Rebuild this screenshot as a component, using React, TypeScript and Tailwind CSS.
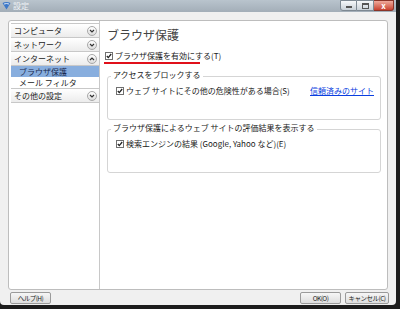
import React from 'react';

const font = { fontFamily: '"Noto Sans CJK JP", "Liberation Sans", sans-serif' };

const Chevron: React.FC<{ up?: boolean }> = ({ up }) => (
  <span className="flex h-[10px] w-[10px] items-center justify-center rounded-full border border-[#a8a8a8] bg-gradient-to-b from-white to-[#dcdcdc]">
    <svg width="6" height="4" viewBox="0 0 6 4">
      <path d={up ? 'M1 3 L3 1 L5 3' : 'M1 1 L3 3 L5 1'} stroke="#333" strokeWidth="1.2" fill="none" />
    </svg>
  </span>
);

const Check: React.FC = () => (
  <span className="flex h-[8px] w-[8px] shrink-0 items-center justify-center border border-[#707070] bg-white">
    <svg width="6" height="6" viewBox="0 0 6 6">
      <path d="M0.8 3 L2.3 4.6 L5.2 1" stroke="#222" strokeWidth="1.3" fill="none" />
    </svg>
  </span>
);

const SideHeader: React.FC<{ label: string; up?: boolean }> = ({ label, up }) => (
  <div className="flex h-[14px] items-center justify-between border-b border-[#c8c8c8] bg-gradient-to-b from-white to-[#ececec] pl-[3px] pr-[2px]">
    <span className="text-[8px] leading-none text-[#222]">{label}</span>
    <Chevron up={up} />
  </div>
);

const GroupBox: React.FC<{ legend: string; children: React.ReactNode }> = ({ legend, children }) => (
  <div className="relative ml-[7px] mr-[6px] h-[44px] rounded-[3px] border border-[#d5d5d5]">
    <span className="absolute left-[3px] top-[-6px] bg-white px-[2px] text-[8px] leading-none text-[#222]">{legend}</span>
    <div className="flex items-center pl-[8px] pr-[6px] pt-[10px]">{children}</div>
  </div>
);

const Button: React.FC<{ label: string; className?: string }> = ({ label, className = '' }) => (
  <button
    className={`flex h-[12px] items-center justify-center whitespace-nowrap rounded-[2px] border border-[#9a9a9a] bg-gradient-to-b from-[#f6f6f6] to-[#dedede] p-0 text-[6.5px] leading-none tracking-[-0.5px] text-[#222] ${className}`}
  >
    {label}
  </button>
);

export default function App() {
  return (
    <div className="h-[309px] w-[400px] overflow-hidden bg-[#1c1c1c]" style={font}>
      <div className="flex h-[305px] w-[396px] flex-col rounded-b-[4px] bg-[#f0f0f0]">
        {/* title bar */}
        <div className="flex h-[12px] items-center justify-between bg-gradient-to-b from-[#b9c4cd] to-[#a3aeb8] pr-[2px]">
          <div className="flex items-center pl-[2px]">
            <svg width="9" height="8" viewBox="0 0 9 8">
              <path d="M0.5 1 Q4.5 -1 8.5 1 L4.5 7.5 Z" fill="#3c78c8" />
              <path d="M2 2 Q4.5 1 7 2" stroke="#fff" strokeWidth="0.8" fill="none" />
            </svg>
            <span className="ml-[2px] text-[8px] leading-none text-[#eef2f5]">設定</span>
          </div>
          <div className="flex h-[11px] shrink-0 self-start">
            <div className="flex h-[11px] w-[17px] items-end justify-center rounded-bl-[3px] border border-[#7d8892] bg-gradient-to-b from-[#f6f8fa] to-[#c9d1d8] pb-[2px]">
              <span className="h-[2px] w-[6px] bg-[#555]" />
            </div>
            <div className="flex h-[11px] w-[17px] items-center justify-center border-y border-r border-[#7d8892] bg-gradient-to-b from-[#f6f8fa] to-[#c9d1d8]">
              <span className="h-[6px] w-[7px] border border-t-2 border-[#555]" />
            </div>
            <div className="flex h-[11px] w-[20px] items-center justify-center rounded-br-[3px] border-y border-r border-[#8a3428] bg-gradient-to-b from-[#eea99c] to-[#c8402f]">
              <span className="text-[8px] font-bold leading-none text-white">x</span>
            </div>
          </div>
        </div>

        {/* main panel */}
        <div className="mx-[8px] mt-[8px] flex h-[270px] overflow-hidden rounded-[3px] border border-[#bdbdbd] bg-white">
          {/* sidebar */}
          <div className="w-[91px] shrink-0 border-r border-[#c8c8c8] pl-[2px] pt-[2px]">
            <div className="border-t border-[#c8c8c8]">
              <SideHeader label="コンピュータ" />
              <SideHeader label="ネットワーク" />
              <SideHeader label="インターネット" up />
              <div className="flex h-[11px] items-center bg-[#88aede] pl-[8px] text-[8px] leading-none text-[#1a2a50]">
                ブラウザ保護
              </div>
              <div className="flex h-[11px] items-center pl-[8px] text-[8px] leading-none text-[#222]">メール フィルタ</div>
              <div className="border-t border-[#c8c8c8]">
                <SideHeader label="その他の設定" />
              </div>
            </div>
          </div>

          {/* content */}
          <div className="flex-1 pt-[8px]">
            <div className="pl-[7px] text-[12px] leading-none text-[#444]">ブラウザ保護</div>
            <div className="mt-[11px] flex items-center pl-[5px]">
              <Check />
              <span className="ml-[2px] text-[8px] leading-none text-[#222]">ブラウザ保護を有効にする(T)</span>
            </div>
            <div className="ml-[4px] mt-[2px] h-[2px] w-[96px] bg-[#e0101a]" />

            <div className="mt-[12px]">
              <GroupBox legend="アクセスをブロックする">
                <Check />
                <span className="ml-[2px] flex-1 text-[8px] leading-none text-[#222]">
                  ウェブ サイトにその他の危険性がある場合(S)
                </span>
                <span className="text-[8px] leading-none text-[#0a3ee0] underline">信頼済みのサイト</span>
              </GroupBox>
            </div>
            <div className="mt-[9px]">
              <GroupBox legend="ブラウザ保護によるウェブ サイトの評価結果を表示する">
                <Check />
                <span className="ml-[2px] text-[8px] leading-none text-[#222]">
                  検索エンジンの結果 (Google, Yahoo など)(E)
                </span>
              </GroupBox>
            </div>
          </div>
        </div>

        {/* buttons */}
        <div className="mt-[2px] flex items-center pl-[10px] pr-[7px]">
          <Button label="ヘルプ(H)" className="w-[41px]" />
          <div className="flex-1" />
          <Button label="OK(O)" className="w-[41px]" />
          <Button label="キャンセル(C)" className="ml-[4px] w-[44px]" />
        </div>
      </div>
    </div>
  );
}
